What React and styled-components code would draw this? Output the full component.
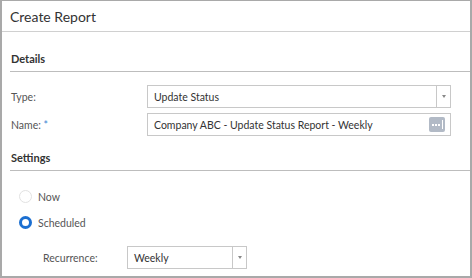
import React from "react";
import styled, { createGlobalStyle } from "styled-components";

const GlobalStyle = createGlobalStyle`
  html, body {
    margin: 0;
    padding: 0;
    background: #fff;
  }
  body {
    font-family: Lato, "Liberation Sans", Arial, sans-serif;
  }
`;

const Dialog = styled.div`
  box-sizing: border-box;
  width: 472px;
  height: 278px;
  border: 2px solid #a9a9a9;
  border-top-width: 1px;
  background: #fff;
  overflow: hidden;
`;

const Header = styled.div`
  height: 30px;
  border-bottom: 1px solid #d0d0d0;
  padding-left: 8px;
  display: flex;
  align-items: center;
  font-size: 14px;
  color: #333;
`;

const Body = styled.div`
  padding: 0 0 0 8px;
`;

const Section = styled.div`
  margin-top: ${(p) => p.top}px;
  height: 28px;
  border-bottom: 1px solid #bdbdbd;
  display: flex;
  align-items: flex-end;
  padding: 0 0 6px 1px;
  box-sizing: border-box;
  font-size: 11px;
  font-weight: bold;
  color: #333;
`;

const Row = styled.div`
  display: flex;
  align-items: center;
  height: 23px;
  margin-top: ${(p) => p.top}px;
  padding-left: ${(p) => p.indent || 1}px;
`;

const Label = styled.div`
  width: ${(p) => p.w}px;
  font-size: 10.5px;
  color: #555;
`;

const Req = styled.span`
  color: #3a86d4;
`;

const Field = styled.div`
  box-sizing: border-box;
  width: ${(p) => p.w}px;
  height: 23px;
  border: 1px solid #c8c8c8;
  display: flex;
  align-items: center;
  font-size: 10.5px;
  color: #333;
`;

const FieldText = styled.div`
  flex: 1;
  padding-left: 6px;
  white-space: nowrap;
  overflow: hidden;
`;

const Caret = styled.div`
  width: 13px;
  height: 100%;
  border-left: 1px solid #c8c8c8;
  display: flex;
  align-items: center;
  justify-content: center;
  &::after {
    content: "";
    border-left: 2.5px solid transparent;
    border-right: 2.5px solid transparent;
    border-top: 3px solid #888;
  }
`;

const MoreButton = styled.div`
  width: 16px;
  height: 15px;
  margin-right: 5px;
  border-radius: 2px;
  background: #b2bac6;
  display: flex;
  align-items: center;
  justify-content: center;
  gap: 1px;
  padding-right: 2px;
  box-sizing: border-box;
  position: relative;
  span {
    width: 2px;
    height: 2px;
    background: #fff;
  }
  &::after {
    content: "";
    position: absolute;
    right: 2px;
    top: 3px;
    width: 1px;
    height: 9px;
    background: #fff;
  }
`;

const RadioRow = styled.div`
  display: flex;
  align-items: center;
  gap: 6px;
  margin-top: ${(p) => p.top}px;
  padding-left: 9px;
  font-size: 10.5px;
  color: #555;
`;

const Radio = styled.div`
  box-sizing: border-box;
  width: 13px;
  height: 13px;
  border-radius: 50%;
  border: ${(p) => (p.checked ? "3.5px solid #1b6fd1" : "1px solid #e2e2e2")};
  background: #fff;
`;

export default function App() {
  return (
    <>
      <GlobalStyle />
      <Dialog>
        <Header>Create Report</Header>
        <Body>
          <Section top={12}>Details</Section>
          <Row top={13}>
            <Label w={136}>Type:</Label>
            <Field w={304}>
              <FieldText>Update Status</FieldText>
              <Caret />
            </Field>
          </Row>
          <Row top={5}>
            <Label w={136}>
              Name: <Req>*</Req>
            </Label>
            <Field w={304}>
              <FieldText>Company ABC - Update Status Report - Weekly</FieldText>
              <MoreButton>
                <span />
                <span />
                <span />
              </MoreButton>
            </Field>
          </Row>
          <Section top={7}>Settings</Section>
          <RadioRow top={19}>
            <Radio />
            Now
          </RadioRow>
          <RadioRow top={13}>
            <Radio checked />
            Scheduled
          </RadioRow>
          <Row top={17} indent={33}>
            <Label w={84}>Recurrence:</Label>
            <Field w={120}>
              <FieldText>Weekly</FieldText>
              <Caret />
            </Field>
          </Row>
        </Body>
      </Dialog>
    </>
  );
}
